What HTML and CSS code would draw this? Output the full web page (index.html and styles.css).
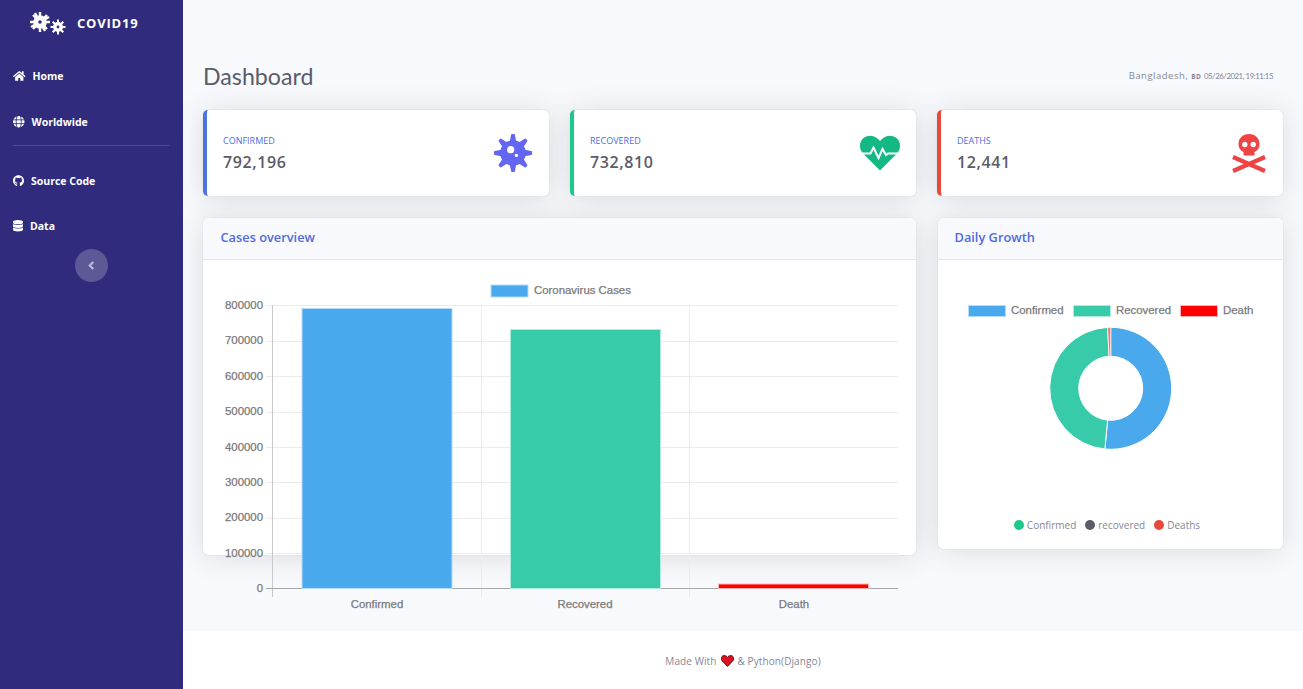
FILE: index.html
```html
<!DOCTYPE html>
<html lang="en">

<head>
  <meta charset="UTF-8">
  <title>COVID19 Dashboard</title>
  <link rel="stylesheet" href="styles.css">
</head>

<body>

  <aside class="sidebar">
    <div class="brand">
      <svg class="brand-icon" viewBox="0 0 36 24" width="36" height="24">
        <circle cx="10" cy="10" r="6.800" fill="#fff"/>
        <path d="M10 0v20M0 10h20M3 3l14 14M17 3L3 17M5 1l10 18M1 15l18-10" stroke="#fff" stroke-width="2.400"/>
        <circle cx="28" cy="15" r="5" fill="#fff"/>
        <path d="M28 7.500v15M20.500 15h15M22.700 9.700l10.600 10.600M33.300 9.700L22.700 20.300" stroke="#fff" stroke-width="2"/>
        <circle cx="10" cy="10" r="1.800" fill="#302b7d"/>
        <circle cx="28" cy="15" r="1.400" fill="#302b7d"/>
      </svg>
      <span class="brand-name">COVID19</span>
    </div>

    <a class="nav-item nav-home">
      <svg class="nav-icon" viewBox="0 0 576 512" width="12.500" height="12"><path d="M280.37 148.26L96 300.11V464a16 16 0 0 0 16 16l112.06-.29a16 16 0 0 0 15.92-16V368a16 16 0 0 1 16-16h64a16 16 0 0 1 16 16v95.64a16 16 0 0 0 16 16.05L464 480a16 16 0 0 0 16-16V300L295.67 148.26a12.19 12.19 0 0 0-15.3 0zM571.6 251.47L488 182.56V44.05a12 12 0 0 0-12-12h-56a12 12 0 0 0-12 12v72.61L318.47 43a48 48 0 0 0-61 0L4.34 251.47a12 12 0 0 0-1.6 16.9l25.5 31A12 12 0 0 0 45.15 301l235.22-193.74a12.19 12.19 0 0 1 15.3 0L530.9 301a12 12 0 0 0 16.9-1.6l25.5-31a12 12 0 0 0-1.7-16.93z"/></svg>
      <span>Home</span>
    </a>
    <a class="nav-item">
      <svg class="nav-icon" viewBox="0 0 24 24" width="11.500" height="11.500">
        <circle cx="12" cy="12" r="12"/>
        <path d="M0 8h24M0 16h24M8.500 0C6 7 6 17 8.500 24M15.500 0C18 7 18 17 15.500 24" fill="none" stroke="#302b7d" stroke-width="1.800"/>
      </svg>
      <span>Worldwide</span>
    </a>

    <hr class="nav-divider">

    <a class="nav-item">
      <svg class="nav-icon" viewBox="0 0 496 512" width="11" height="11.500"><path d="M244.8 8C106.1 8 0 113.3 0 252c0 110.9 69.8 205.8 169.5 239.2 12.8 2.3 17.3-5.6 17.3-12.1 0-6.2-.3-40.4-.3-61.4 0 0-70 15-84.7-29.8 0 0-11.4-29.1-27.8-36.6 0 0-22.9-15.7 1.6-15.4 0 0 24.9 2 38.6 25.8 21.9 38.6 58.6 27.5 72.9 20.9 2.3-16 8.8-27.1 16-33.7-55.9-6.2-112.3-14.3-112.3-110.5 0-27.5 7.6-41.3 23.6-58.9-2.6-6.5-11.1-33.3 2.6-67.9 20.9-6.5 69 27 69 27 20-5.6 41.5-8.5 62.8-8.5s42.8 2.9 62.8 8.5c0 0 48.1-33.6 69-27 13.7 34.7 5.2 61.4 2.6 67.9 16 17.7 25.8 31.5 25.8 58.9 0 96.5-58.9 104.2-114.8 110.5 9.2 7.9 17 22.9 17 46.4 0 33.7-.3 75.4-.3 83.6 0 6.5 4.6 14.4 17.3 12.1C428.2 457.8 496 362.9 496 252 496 113.3 383.5 8 244.8 8z"/></svg>
      <span>Source Code</span>
    </a>
    <a class="nav-item">
      <svg class="nav-icon" viewBox="0 0 448 512" width="10" height="11.500"><path d="M448 73.143v45.714C448 159.143 347.667 192 224 192S0 159.143 0 118.857V73.143C0 32.857 100.333 0 224 0s224 32.857 224 73.143zM448 176v102.857C448 319.143 347.667 352 224 352S0 319.143 0 278.857V176c48.125 33.143 136.208 48.572 224 48.572S399.874 209.143 448 176zm0 160v102.857C448 479.143 347.667 512 224 512S0 479.143 0 438.857V336c48.125 33.143 136.208 48.572 224 48.572S399.874 369.143 448 336z"/></svg>
      <span>Data</span>
    </a>

    <button class="sidebar-toggle">
      <svg viewBox="0 0 8 10" width="7" height="9"><path d="M6 1L2 5l4 4" fill="none" stroke="#b9b7d3" stroke-width="2.600"/></svg>
    </button>
  </aside>

  <div class="page">
    <main class="content">
      <div class="title-row">
        <h1 class="title">Dashboard</h1>
        <div class="location">Bangladesh, <b class="country">BD</b> <span class="stamp">05/26/2021, 19:11:15</span></div>
      </div>

      <div class="grid">
        <div class="card stat stat-blue">
          <div class="stat-text">
            <div class="stat-label">CONFIRMED</div>
            <div class="stat-value">792,196</div>
          </div>
          <svg class="stat-icon" viewBox="-20 -20 40 40" width="40" height="40">
            <g fill="#6366f1" stroke="#6366f1" stroke-linejoin="round" stroke-width="1.800">
              <path d="M-2.600-10L-1-18.200H1L2.600-10z"/>
              <path d="M-2.600-10L-1-18.200H1L2.600-10z" transform="rotate(45)"/>
              <path d="M-2.600-10L-1-18.200H1L2.600-10z" transform="rotate(90)"/>
              <path d="M-2.600-10L-1-18.200H1L2.600-10z" transform="rotate(135)"/>
              <path d="M-2.600-10L-1-18.200H1L2.600-10z" transform="rotate(180)"/>
              <path d="M-2.600-10L-1-18.200H1L2.600-10z" transform="rotate(225)"/>
              <path d="M-2.600-10L-1-18.200H1L2.600-10z" transform="rotate(270)"/>
              <path d="M-2.600-10L-1-18.200H1L2.600-10z" transform="rotate(315)"/>
            </g>
            <circle r="12.800" fill="#6366f1"/>
            <circle cx="-2.300" cy="-3.300" r="3.600" fill="#fff"/>
            <circle cx="3.400" cy="2.400" r="1.700" fill="#fff"/>
          </svg>
        </div>

        <div class="card stat stat-green">
          <div class="stat-text">
            <div class="stat-label">RECOVERED</div>
            <div class="stat-value">732,810</div>
          </div>
          <svg class="stat-icon" viewBox="0 0 40 36" width="40" height="36">
            <path d="M20 35.500L3 18.500C-1 14-1 7 3 3.500 8-1 15 0 20 6 25 0 32-1 37 3.500 41 7 41 14 37 18.500z" fill="#14b884"/>
            <path d="M0 18.500H10.500L13.500 12.500 18.500 23 22.500 14 26 20 28 18.500H40" fill="none" stroke="#fff" stroke-width="2"/>
          </svg>
        </div>

        <div class="card stat stat-red">
          <div class="stat-text">
            <div class="stat-label">DEATHS</div>
            <div class="stat-value">12,441</div>
          </div>
          <svg class="stat-icon" viewBox="0 0 36 40" width="36" height="40">
            <path d="M18 1C11.500 1 7.500 5.500 7.500 11c0 4 2 6.500 5 8v3.500h11V19c3-1.500 5-4 5-8C28.500 5.500 24.500 1 18 1z" fill="#ef4444"/>
            <circle cx="13.800" cy="11.500" r="2.700" fill="#fff"/>
            <circle cx="22.200" cy="11.500" r="2.700" fill="#fff"/>
            <path d="M2 24L34 38M34 24L2 38" stroke="#ef4444" stroke-width="4.200"/>
          </svg>
        </div>

        <section class="card panel panel-wide">
          <h2 class="panel-head">Cases overview</h2>
          <div class="bar-body">
            <svg class="bar-chart" viewBox="203 260 713 350" width="713" height="350">
              <g stroke="#ececec">
                <path d="M266 305.500H898M266 341.500H898M266 376.500H898M266 412.500H898M266 447.500H898M266 482.500H898M266 518.500H898M266 553.500H898"/>
                <path d="M481.500 305V597M689.500 305V597"/>
              </g>
              <path d="M272.500 305V597" stroke="#c9c9c9"/>
              <path d="M266 588.500H898" stroke="#a8a8a8"/>

              <rect x="302" y="308.500" width="150" height="280" fill="#4aa8ec" stroke="#b5dbf7"/>
              <rect x="510.500" y="329.500" width="150" height="259" fill="#37cbaa" stroke="#b0ebdd"/>
              <rect x="718.500" y="584" width="150" height="4.500" fill="#ff0000" stroke="#ffb3b3"/>

              <rect x="491" y="285" width="37" height="12" fill="#4aa8ec" stroke="#b5dbf7"/>
              <text class="chart-text" x="534" y="294">Coronavirus Cases</text>

              <g class="chart-text tick-text">
                <text x="263" y="309">800000</text>
                <text x="263" y="344.300">700000</text>
                <text x="263" y="380">600000</text>
                <text x="263" y="415.300">500000</text>
                <text x="263" y="451">400000</text>
                <text x="263" y="486">300000</text>
                <text x="263" y="521.300">200000</text>
                <text x="263" y="556.500">100000</text>
                <text x="263" y="592">0</text>
              </g>
              <g class="chart-text label-text">
                <text x="377" y="608">Confirmed</text>
                <text x="585" y="608">Recovered</text>
                <text x="794" y="608">Death</text>
              </g>
            </svg>
          </div>
        </section>

        <section class="card panel panel-side">
          <h2 class="panel-head">Daily Growth</h2>
          <div class="donut-body">
            <svg class="donut-chart" viewBox="938 260 345 240" width="345" height="240">
              <rect x="968.500" y="305.500" width="37" height="11" fill="#4aa8ec" stroke="#b5dbf7"/>
              <text class="chart-text" x="1011" y="314">Confirmed</text>
              <rect x="1073.500" y="305.500" width="37" height="11" fill="#37cbaa" stroke="#b0ebdd"/>
              <text class="chart-text" x="1116" y="314">Recovered</text>
              <rect x="1180.500" y="305.500" width="37" height="11" fill="#ff0000" stroke="#ffb3b3"/>
              <text class="chart-text" x="1223" y="314">Death</text>

              <g transform="translate(1110.700 388.300)" stroke="#fff" stroke-width="1">
                <path d="M0-61A61 61 0 1 1-5.850 60.720L-3.070 31.850A32 32 0 1 0 0-32z" fill="#4aa8ec"/>
                <path d="M-5.850 60.720A61 61 0 0 1-3.090-60.920L-1.620-31.960A32 32 0 0 0-3.070 31.850z" fill="#37cbaa"/>
                <path d="M-3.090-60.920A61 61 0 0 1 0-61V-32A32 32 0 0 0-1.620-31.960z" fill="#ff6a6a" stroke-width="0.800"/>
              </g>
            </svg>
            <div class="donut-legend">
              <span class="legend-item"><i class="dot dot-green"></i>Confirmed</span>
              <span class="legend-item"><i class="dot dot-gray"></i>recovered</span>
              <span class="legend-item"><i class="dot dot-red"></i>Deaths</span>
            </div>
          </div>
        </section>
      </div>
    </main>

    <footer class="footer">
      <span>Made With</span>
      <svg class="footer-heart" viewBox="0 0 24 22" width="13" height="12">
        <path d="M12 21L2 10.500C-1 6.500 1 1 6 1c3 0 5 1.500 6 3.500C13 2.500 15 1 18 1c5 0 7 5.500 4 9.500z" fill="#e0101f" stroke="#3a0a10" stroke-width="1.600"/>
      </svg>
      <span>&amp; Python(Django)</span>
    </footer>
  </div>

</body>

</html>
```

FILE: styles.css
```css
* {
  box-sizing: border-box;
}

body {
  margin: 0;
  height: 100vh;
  display: flex;
  overflow: hidden;
  font-family: "Open Sans", "Noto Sans", sans-serif;
  background: #f8f9fc;
  color: #858796;
}

/* sidebar */
.sidebar {
  width: 183px;
  flex-shrink: 0;
  background: #302b7d;
  color: #fff;
  display: flex;
  flex-direction: column;
}

.brand {
  height: 47px;
  padding: 0 0 0 30px;
  display: flex;
  align-items: center;
  gap: 11px;
  margin-bottom: 6.5px;
}

.brand-name {
  margin-bottom: 2px;
  font-size: 13px;
  font-weight: 700;
  letter-spacing: 0.8px;
}

.nav-item {
  height: 45px;
  padding-left: 13px;
  display: flex;
  align-items: center;
  gap: 7px;
  font-size: 10.5px;
  font-weight: 700;
}

.nav-home {
  margin-bottom: 1px;
}

.nav-icon {
  fill: #fff;
  flex-shrink: 0;
}

.nav-divider {
  margin: 0 13px 13px;
  border: 0;
  border-top: 1px solid rgba(255, 255, 255, 0.15);
  width: 157px;
}

.sidebar-toggle {
  width: 33px;
  height: 33px;
  margin-left: 75px;
  padding: 0;
  border: 0;
  border-radius: 50%;
  background: #5d5896;
  display: flex;
  align-items: center;
  justify-content: center;
}

/* main column */
.page {
  flex: 1;
  display: flex;
  flex-direction: column;
}

.content {
  flex: 1;
  padding: 61px 20px 0;
}

.title-row {
  height: 30px;
  margin-bottom: 19px;
  display: flex;
  justify-content: space-between;
  align-items: center;
}

.title {
  margin: 0;
  font-family: Lato, sans-serif;
  font-size: 23.2px;
  font-weight: 400;
  color: #5a5c69;
}

.location {
  padding-right: 10px;
  padding-bottom: 2px;
  font-size: 9.5px;
  letter-spacing: 0.5px;
}

.country {
  font-size: 6.5px;
  letter-spacing: 0.3px;
}

.stamp {
  font-family: Lato, sans-serif;
  font-size: 7.8px;
  letter-spacing: -0.45px;
}

.grid {
  display: grid;
  grid-template-columns: repeat(3, 346px);
  column-gap: 21px;
  row-gap: 22px;
  align-items: start;
}

.card {
  background: #fff;
  border-radius: 5px;
  box-shadow: 0 2px 28px rgba(58, 59, 69, 0.15), 0 0 1px rgba(58, 59, 69, 0.3);
}

/* stat cards */
.stat {
  height: 86px;
  padding: 0 16px;
  display: flex;
  justify-content: space-between;
  align-items: center;
  border-left: 4px solid;
}

.stat-blue {
  border-left-color: #4e73df;
}

.stat-green {
  border-left-color: #1cc88a;
}

.stat-red {
  border-left-color: #e74a3b;
}

.stat-text {
  padding-top: 1px;
}

.stat-label {
  font-size: 9px;
  color: #4e6be0;
  margin-bottom: 4px;
}

.stat-value {
  font-size: 16px;
  font-weight: 600;
  color: #5a5c69;
  letter-spacing: 0.6px;
}

/* chart panels */
.panel-wide {
  grid-column: span 2;
}

.panel-side {
  margin-left: 1px;
  width: 345px;
}

.panel-side .panel-head {
  padding-left: 16.5px;
}

.panel-head {
  height: 42px;
  margin: 0;
  padding: 0 17.5px 4px;
  display: flex;
  align-items: center;
  font-size: 12.8px;
  font-weight: 600;
  color: #4e6be0;
  background: #f8f9fc;
  border-bottom: 1px solid #e3e6f0;
  border-radius: 5px 5px 0 0;
}

.bar-body {
  height: 295px;
}

.bar-chart,
.donut-chart {
  display: block;
  overflow: visible;
}

.chart-text {
  font-family: "Liberation Sans", Arial, sans-serif;
  font-size: 11.4px;
  fill: #707070;
  stroke: #888;
  stroke-width: 0.25;
}

.tick-text {
  text-anchor: end;
}

.label-text {
  text-anchor: middle;
}

.donut-body {
  height: 289px;
}

.donut-legend {
  display: flex;
  justify-content: center;
  gap: 9px;
  padding-top: 18px;
  padding-right: 7px;
  font-size: 10px;
}

.legend-item {
  display: flex;
  align-items: center;
  gap: 3px;
}

.dot {
  width: 10px;
  height: 10px;
  border-radius: 50%;
}

.dot-green {
  background: #1cc88a;
}

.dot-gray {
  background: #5a5c69;
}

.dot-red {
  background: #e74a3b;
}

/* footer */
.footer {
  height: 58px;
  flex-shrink: 0;
  padding-top: 2px;
  background: #fff;
  display: flex;
  justify-content: center;
  align-items: center;
  gap: 4px;
  font-size: 10px;
  letter-spacing: 0.1px;
}
```
